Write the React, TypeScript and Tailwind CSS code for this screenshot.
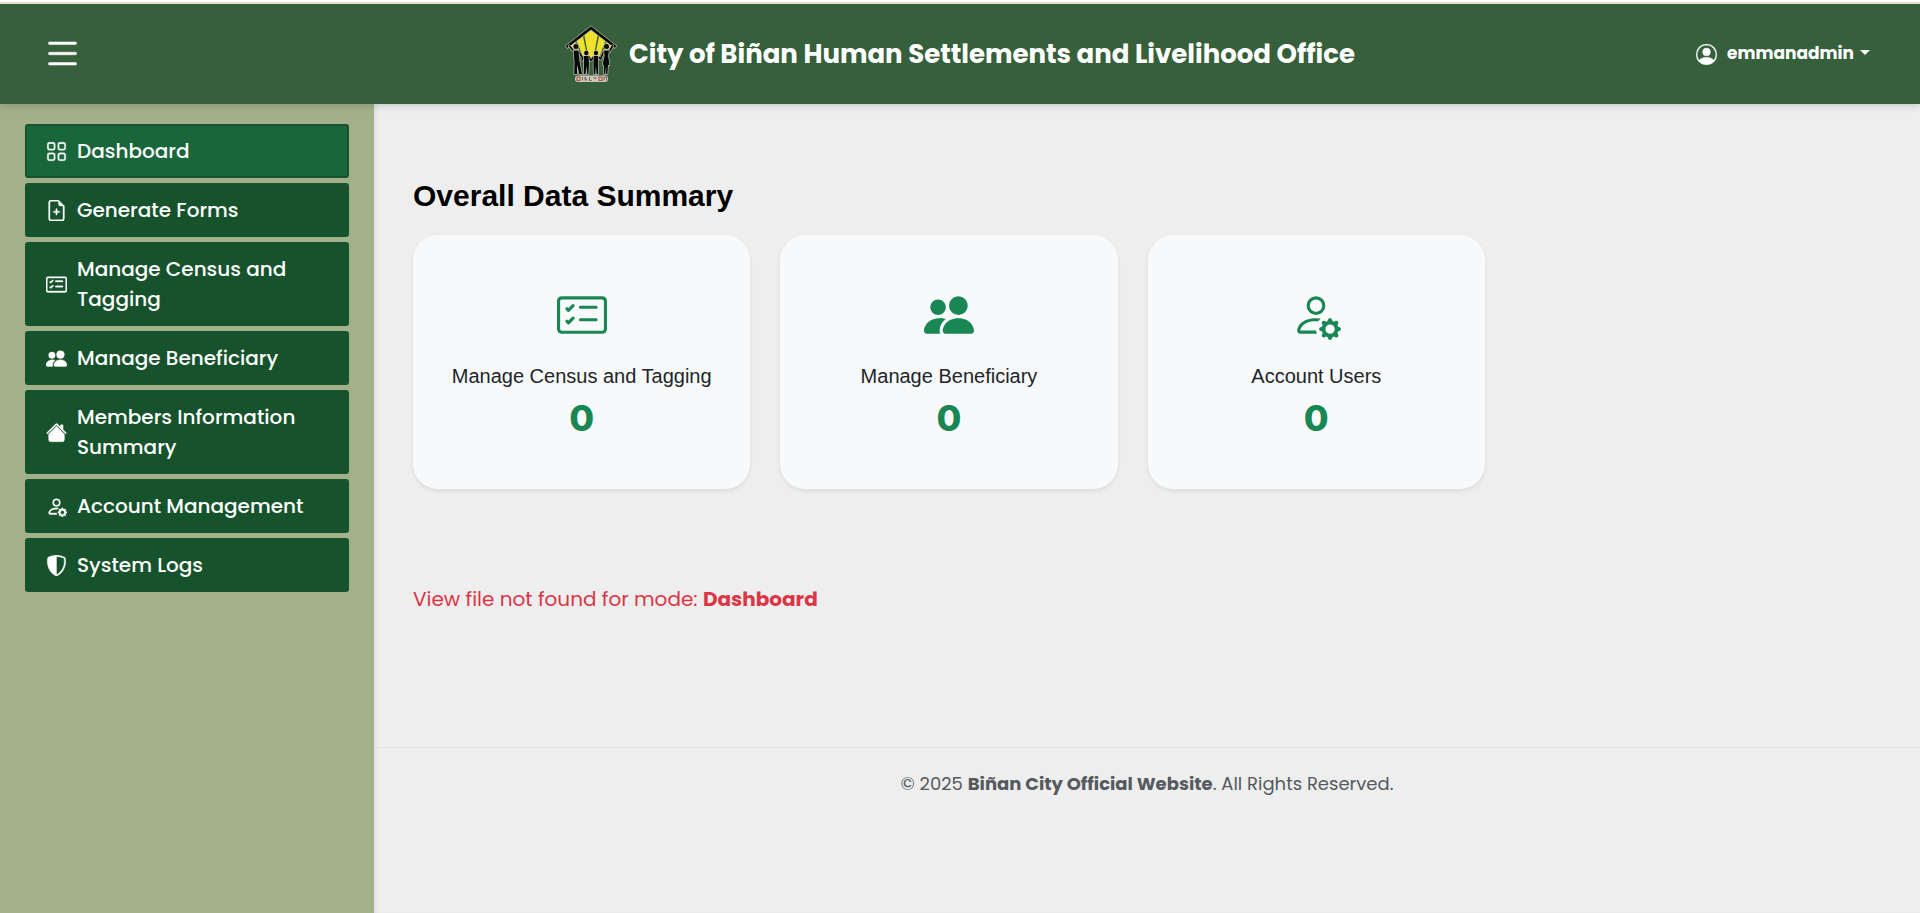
import React from "react";
import type { IconType } from "react-icons";
import {
  BsCardChecklist,
  BsFileEarmarkPlus,
  BsGrid,
  BsHouseFill,
  BsList,
  BsPeopleFill,
  BsPersonCircle,
  BsPersonGear,
  BsShieldShaded,
} from "react-icons/bs";

type NavItem = { label: string; icon: IconType; active?: boolean };
type Stat = { label: string; icon: IconType; value: number };

const navItems: NavItem[] = [
  { label: "Dashboard", icon: BsGrid, active: true },
  { label: "Generate Forms", icon: BsFileEarmarkPlus },
  { label: "Manage Census and Tagging", icon: BsCardChecklist },
  { label: "Manage Beneficiary", icon: BsPeopleFill },
  { label: "Members Information Summary", icon: BsHouseFill },
  { label: "Account Management", icon: BsPersonGear },
  { label: "System Logs", icon: BsShieldShaded },
];

const stats: Stat[] = [
  { label: "Manage Census and Tagging", icon: BsCardChecklist, value: 0 },
  { label: "Manage Beneficiary", icon: BsPeopleFill, value: 0 },
  { label: "Account Users", icon: BsPersonGear, value: 0 },
];

function Logo() {
  return (
    <svg viewBox="0 0 52 58" className="h-[58px] w-[52px] shrink-0" aria-hidden="true">
      <g fill="#f0e22c">
        <path d="M25 3 19 8 23.500 33H28.500L33 8 27 3Z" />
        <path d="M17.500 9 11 14 18.500 33 22 31Z" />
        <path d="M34.500 9 41 14 34 33 30 31Z" />
        <path d="M9.500 15 4 21 14 29 17 33Z" />
        <path d="M42.500 15 48 21 38 29 35.500 33Z" />
      </g>
      <path d="M1 22.500 26 3 51 22.500" fill="none" stroke="#b3b8a6" strokeWidth="4" />
      <path d="M1.500 22 26 3 50.500 22" fill="none" stroke="#080808" strokeWidth="2.600" />
      <g stroke="#c3c8b8" strokeWidth="3" strokeLinecap="round" strokeLinejoin="round" fill="none">
        <path d="M4.500 21 9.500 27M14 27 17 32M19 32 17 35M24 32 25.500 35M28.500 32 26.500 35M33.500 32 35.500 34M38.500 27 36 33M44 27 47.500 21" />
      </g>
      <g stroke="#080808" strokeWidth="1.700" strokeLinecap="round" fill="none">
        <path d="M4.500 21 9.500 27M14 27 17 32M19 32 17 35M24 32 25.500 35M28.500 32 26.500 35M33.500 32 35.500 34M38.500 27 36 33M44 27 47.500 21" />
      </g>
      <g stroke="#c3c8b8" strokeWidth="1.300" strokeLinejoin="round" fill="#080808" paintOrder="stroke">
        <path d="M8.500 25.500H13.500L14.500 36 17 49H14.300L12 39.500 12 49H9.200L9.500 37Z" />
        <path d="M19 31H23.500L24 38 23.500 49H22L21.500 41 20.500 49H18.700L19 38Z" />
        <path d="M28.700 31H33.200L33.200 38 33.200 49H31.500L31 41 30.300 49H28.600L28.400 38Z" />
        <path d="M39 25.500H44L43.200 31 44.500 40H43L42.500 49H41.200L41 40.500 40.300 49H39L38.700 40H37.500L39.500 31Z" />
        <circle cx="11" cy="21.500" r="2.500" />
        <circle cx="21.300" cy="28" r="2.200" />
        <circle cx="31" cy="28" r="2.200" />
        <circle cx="41.500" cy="21.500" r="2.500" />
      </g>
      <rect x="10" y="50.500" width="33" height="6.500" rx="3" fill="#cfc6ba" />
      <path d="M12 52h3v3.500h-3zM34 52h3v3.500h-3z" stroke="#a8574d" strokeWidth="1.100" fill="none" />
      <path d="M17.500 52v3.500M20 55.500V52l2 3.500M24.500 52v3.500h2M28.500 52l1.500 2 1.500-2M39 55.500V52h2.500v3.500" stroke="#665b54" strokeWidth="0.900" fill="none" />
    </svg>
  );
}

export default function App() {
  return (
    <div className="flex min-h-screen flex-col bg-[#eeeeee] font-[Poppins,Inter,sans-serif] text-[#212529]">
      <header className="relative z-10 border-t-2 border-white bg-[#365f3b] shadow-[0_2px_8px_rgba(0,0,0,0.15)]">
        <div className="grid h-[102px] grid-cols-[1fr_auto_1fr] items-center border-t-2 border-[#f0ddd0] px-[42px] text-white">
          <button type="button" aria-label="Toggle menu" className="justify-self-start pb-0.5">
            <BsList size={41} className="[stroke-width:0.2]" />
          </button>
          <div className="flex items-center gap-3">
            <Logo />
            <h1 className="text-[26px] leading-8 font-bold">City of Biñan Human Settlements and Livelihood Office</h1>
          </div>
          <button type="button" className="mr-2 flex items-center justify-self-end text-[17px] font-bold">
            <BsPersonCircle size={21} className="mr-2.5 [stroke-width:0.2]" />
            emmanadmin
            <span className="mb-1 ml-1.5 border-x-[5px] border-t-[5px] border-x-transparent border-t-white" />
          </button>
        </div>
      </header>

      <div className="flex flex-1">
        <aside className="w-[374px] shrink-0 bg-[#a3b18a] px-[25px] py-5">
          <nav aria-label="Main" className="flex flex-col gap-[5px]">
            {navItems.map(({ label, icon: Icon, active }) => (
              <a
                key={label}
                href="#"
                aria-current={active ? "page" : undefined}
                className={
                  active
                    ? "flex items-center gap-[10px] rounded-[3px] border-2 border-[#16532d] bg-[#19663b] px-[19px] py-[10px] text-xl leading-[30px] font-medium text-white"
                    : "flex items-center gap-[10px] rounded-[3px] border-2 border-[#16532d] bg-[#16532d] px-[19px] py-[10px] text-xl leading-[30px] font-medium text-white"
                }
              >
                <Icon size={21} className="shrink-0 [stroke-width:0.3]" />
                <span>{label}</span>
              </a>
            ))}
          </nav>
        </aside>

        <div className="min-w-0 flex-1 shadow-[inset_4px_0_6px_-4px_rgba(0,0,0,0.12)]">
          <main className="min-h-[643px] px-[39px] pt-[72px]">
            <h2 className="font-['Liberation_Sans',Arial,sans-serif] text-[30px] leading-10 font-bold text-black">
              Overall Data Summary
            </h2>
            <section className="mt-[19px] grid max-w-[1072px] grid-cols-3 gap-[30px]">
              {stats.map(({ label, icon: Icon, value }) => (
                <article
                  key={label}
                  className="flex h-[254px] flex-col items-center rounded-[25px] bg-[#f8f9fa] pt-[55px] shadow-[0_2px_4px_rgba(0,0,0,0.08)]"
                >
                  <Icon size={50} className="text-[#198754]" />
                  <h3 className="mt-[21px] font-['Liberation_Sans',Arial,sans-serif] text-xl leading-[30px]">{label}</h3>
                  <p className="mt-1 font-[Inter,sans-serif] text-4xl leading-[46px] font-extrabold text-[#198754]">{value}</p>
                </article>
              ))}
            </section>
            <p className="mt-[95px] text-xl leading-[30px] text-[#dc3545]">
              View file not found for mode: <strong className="font-bold">Dashboard</strong>
            </p>
          </main>
          <footer className="border-t border-[#dee2e6] py-6 text-center text-lg leading-6 text-[#555a5e]">
            © 2025 <strong className="font-bold">Biñan City Official Website</strong>. All Rights Reserved.
          </footer>
        </div>
      </div>
    </div>
  );
}
